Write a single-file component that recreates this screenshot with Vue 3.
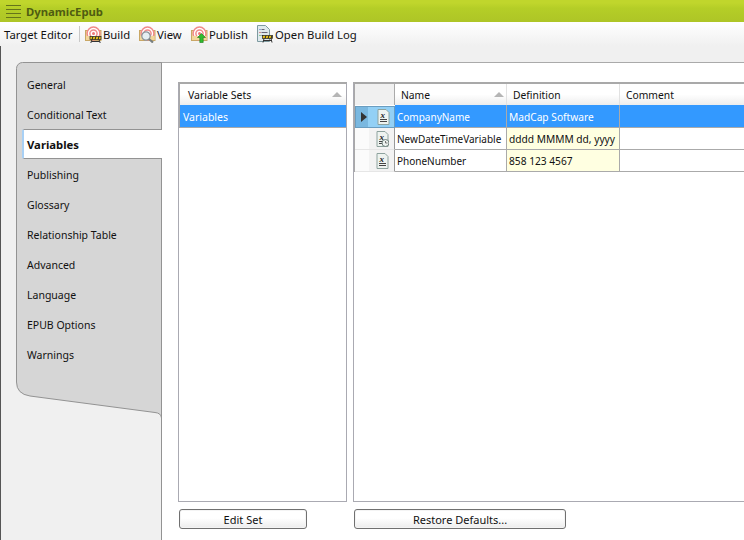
<script setup>
const tabs = ['General', 'Conditional Text', 'Variables', 'Publishing', 'Glossary', 'Relationship Table', 'Advanced', 'Language', 'EPUB Options', 'Warnings']
const rows = [
  { name: 'CompanyName', def: 'MadCap Software', selected: true, clock: false },
  { name: 'NewDateTimeVariable', def: 'dddd MMMM dd, yyyy', selected: false, clock: true },
  { name: 'PhoneNumber', def: '858 123 4567', selected: false, clock: false }
]
const tools = [
  { label: 'Build', kind: 'build' },
  { label: 'View', kind: 'view' },
  { label: 'Publish', kind: 'publish' }
]
</script>

<template>
  <div class="app">
    <header class="title">
      <svg class="menu" width="16" height="13" viewBox="0 0 16 13">
        <path d="M0 0.5h15M0 4.5h15M0 8.5h15M0 12.5h15" stroke="#66741a" stroke-width="1" fill="none" />
      </svg>
      <span>DynamicEpub</span>
    </header>

    <div class="toolbar">
      <span class="target">Target Editor</span>
      <span class="sep"></span>
      <button v-for="t in tools" :key="t.label" class="tool" :class="'tool-' + t.kind" type="button">
        <svg width="17" height="17" viewBox="0 0 17 17">
          <rect x="0.5" y="4.5" width="15.5" height="10" fill="#f3d69b" stroke="#c9a765" />
          <circle cx="8.5" cy="7.5" r="6.4" fill="#fff" stroke="#f08a8a" stroke-width="1.5" />
          <circle cx="8.5" cy="7.5" r="3.6" fill="#fff" stroke="#f08a8a" stroke-width="1.5" />
          <circle cx="8.5" cy="7.5" r="1.5" fill="#ee7676" />
          <rect x="1" y="10" width="14.5" height="4" fill="#f3d69b" />
          <template v-if="t.kind === 'build'">
            <rect x="5" y="10.5" width="11" height="3" fill="#e9c21c" stroke="#222" stroke-width="0.7" />
            <path d="M7 13.5l1-3M10 13.5l1-3M13 13.5l1-3" stroke="#222" />
            <path d="M7 13.5l-1.2 3.5M14 13.5l1.2 3.5M6.5 15.5h8" stroke="#333" fill="none" />
          </template>
          <template v-if="t.kind === 'view'">
            <circle cx="7" cy="10" r="4.2" fill="#e6eef2" stroke="#8a9299" stroke-width="1.2" />
            <path d="M10 13l4 3.5" stroke="#777f80" stroke-width="2.2" />
          </template>
          <template v-if="t.kind === 'publish'">
            <path d="M10.5 7.5l4 4h-2.3v5h-3.4v-5h-2.3z" fill="#2fbb2f" stroke="#187a18" stroke-width="0.6" />
          </template>
        </svg>
        <span>{{ t.label }}</span>
      </button>
      <button class="tool tool-log" type="button">
        <svg width="17" height="18" viewBox="0 0 17 18">
          <path d="M1.5 0.5h8l4 4v12h-12z" fill="#dfe9ed" stroke="#7d9aa0" />
          <path d="M3.5 4.5h1" stroke="#3366cc" />
          <path d="M5.5 4.5h3M5.5 7.5h6M5.5 10.5h2" stroke="#667" />
          <path d="M3.5 7.5h1" stroke="#cc3333" />
          <path d="M3.5 10.5h1" stroke="#33aa33" />
          <rect x="6.5" y="10.5" width="10" height="3" fill="#e9c21c" stroke="#222" stroke-width="0.7" />
          <path d="M9 13.5l1-3M12 13.5l1-3M15 13.5l1-3" stroke="#222" />
          <path d="M8 13.5l-1 4M15 13.5l1 4M8 15.5h7" stroke="#333" fill="none" />
        </svg>
        <span>Open Build Log</span>
      </button>
    </div>

    <main class="body">
      <nav class="side">
        <svg class="side-shape" width="146" height="358" viewBox="0 0 146 358">
          <path d="M0.5 6.5a6 6 0 0 1 6-6H145.5V356Q145 351 139 350.5L14 334Q0.5 332 0.5 320z" fill="#d6d6d6" stroke="#939393" />
        </svg>
        <ul class="tabs">
          <li v-for="t in tabs" :key="t" :class="{ active: t === 'Variables' }">{{ t }}</li>
        </ul>
      </nav>

      <section class="content">
        <div class="panes">
          <div class="left-col">
            <div class="sets">
              <div class="sets-head">
                <span>Variable Sets</span>
                <i class="sort"></i>
              </div>
              <div class="sets-row">Variables</div>
            </div>
            <button class="btn edit" type="button">Edit Set</button>
          </div>

          <div class="right-col">
            <div class="grid">
              <div class="grid-head">
                <div class="corner"></div>
                <div class="hcell name">Name<i class="sort"></i></div>
                <div class="hcell def">Definition</div>
                <div class="hcell comment">Comment</div>
              </div>
              <div v-for="r in rows" :key="r.name" class="grid-row" :class="{ selected: r.selected }">
                <div class="rowhead">
                  <i class="arrow" :class="{ hidden: !r.selected }"></i>
                  <svg width="13" height="16" viewBox="0 0 13 16">
                    <path d="M1 0.5h8l3 3v12H1z" fill="#eef3f0" stroke="#8ea39e" />
                    <text x="3.5" y="8.5" font-size="9" font-family="Liberation Serif, serif" font-style="italic" font-weight="700" fill="#222">x</text>
                    <path d="M3 10.5h7M3 12.5h7" stroke="#444" />
                    <g v-if="r.clock">
                      <circle cx="9.5" cy="12" r="3.5" fill="#eef3f0" stroke="#6f807c" />
                      <path d="M9.5 10v2h2" stroke="#555" fill="none" stroke-width="0.8" />
                    </g>
                  </svg>
                </div>
                <div class="cell name">{{ r.name }}</div>
                <div class="cell def">{{ r.def }}</div>
                <div class="cell comment"></div>
              </div>
            </div>
            <button class="btn restore" type="button">Restore Defaults...</button>
          </div>
        </div>
      </section>
    </main>
  </div>
</template>

<style>
html, body { margin: 0; overflow: hidden; }
</style>

<style scoped>
.app {
  width: 744px;
  height: 540px;
  overflow: hidden;
  display: flex;
  flex-direction: column;
  background: #f0f0f0;
  font-family: "Noto Sans", "Liberation Sans", sans-serif;
  font-size: 10.5px;
  color: #111;
}
.title {
  height: 22px;
  flex: none;
  display: flex;
  align-items: center;
  gap: 4px;
  padding-left: 6px;
  background: linear-gradient(#c0d62c 0 3px, #b5ce27 8px, #aec526);
  font-weight: 700;
  color: #4f5c12;
  font-size: 11.3px;
}
.menu { margin-top: 1px; }
.toolbar {
  height: 24px;
  flex: none;
  display: flex;
  align-items: center;
  padding-left: 4px;
  background: linear-gradient(#ffffff, #f0f0f0);
  font-size: 11.3px;
}
.target { width: 75px; flex: none; }
.sep { width: 1px; height: 16px; background: #c8c8c8; flex: none; margin-right: 5px; }
.tool {
  all: unset;
  display: flex;
  align-items: center;
  gap: 1px;
  font: inherit;
  cursor: default;
  flex: none;
}
.tool-build { width: 54px; }
.tool-view { width: 52px; }
.tool-publish { width: 65px; }
.tool-log { gap: 2px; }
.body {
  flex: 1;
  display: flex;
  padding-top: 16px;
  min-height: 0;
  border-left: 1px solid #555;
}
.side {
  position: relative;
  width: 145px;
  margin-left: 15px;
  flex: none;
}
.side-shape { position: absolute; left: 0; top: 0; }
.tabs {
  position: relative;
  list-style: none;
  margin: 8px 0 0;
  padding: 0;
}
.tabs li {
  height: 30px;
  line-height: 30px;
  padding-left: 11px;
  box-sizing: border-box;
}
.tabs li.active {
  margin: -1px -1px 1px 6px;
  padding-left: 3px;
  background: #fff;
  font-weight: 700;
  font-size: 11.3px;
  border: 1px solid #939393;
  border-left: 2px solid #a8d0f5;
  border-right: 0;
  border-radius: 2px 0 0 2px;
  line-height: 30px;
}
.content {
  flex: 1;
  background: #fff;
  border-top: 1px solid #aaa;
  border-left: 1px solid #939393;
  box-sizing: border-box;
  min-width: 0;
}
.panes {
  display: flex;
  gap: 6px;
  padding: 19px 0 0 16px;
}
.left-col { width: 169px; flex: none; }
.right-col { width: 420px; flex: none; }
.sets, .grid {
  height: 420px;
  box-sizing: border-box;
  border: 1px solid #aaaab2;
  border-top: 2px solid #a9a9a9;
  padding-left: 1px;
  background: #fff;
}
.sets-head {
  height: 21px;
  display: flex;
  align-items: center;
  justify-content: space-between;
  padding: 0 4px 0 8px;
  background: linear-gradient(#fff 50%, #ededed);
  box-sizing: border-box;
  box-shadow: -1px 0 #a9a9a9;
}
.sets-row {
  height: 23px;
  line-height: 23px;
  padding: 1px 0 0 3px;
  box-sizing: border-box;
  background: #3399ff;
  color: #fff;
  border-bottom: 1px solid #a9a9a9;
  box-shadow: -1px 0 #a9a9a9;
}
.sort {
  display: inline-block;
  width: 0;
  height: 0;
  border-left: 5px solid transparent;
  border-right: 5px solid transparent;
  border-bottom: 5px solid #b5b5b5;
}
.grid { border-right: 0; }
.grid-head {
  height: 21px;
  display: flex;
  background: linear-gradient(#fff 50%, #ededed);
  box-sizing: border-box;
  box-shadow: -1px 0 #a9a9a9;
  font-size: 10.3px;
}
.corner { width: 40px; flex: none; background: #f0f0f0; box-sizing: border-box; border-right: 1px solid #aaa; }
.hcell {
  display: flex;
  align-items: center;
  justify-content: space-between;
  padding: 0 2px 0 6px;
  box-sizing: border-box;
  border-right: 1px solid #e2e2e2;
}
.name { width: 112px; flex: none; }
.def { width: 113px; flex: none; }
.comment { flex: 1; }
.grid-row {
  height: 22px;
  display: flex;
  box-sizing: border-box;
  border-bottom: 1px solid #aaa;
  box-shadow: -1px 0 #a9a9a9;
}
.grid-row.selected { height: 23px; }
.rowhead {
  width: 40px;
  flex: none;
  box-sizing: border-box;
  display: flex;
  align-items: center;
  justify-content: space-between;
  padding: 0 5px 0 6px;
  background: linear-gradient(90deg, #fbfbfb 0 14px, #f3f3f3 14px);
  border-right: 1px solid #999;
  margin-bottom: -1px;
}
.grid-row:not(.selected) .rowhead { border-bottom: 1px solid #e6e6e6; }
.grid-row.selected .rowhead {
  background: linear-gradient(90deg, #7ab8e0 0 12px, #93d0f5 12px);
  margin-top: 1px;
  padding-left: 5px;
  padding-right: 4px;
  border: 1px solid #6a9dc0;
}
.arrow {
  display: block;
  width: 0;
  height: 0;
  border-top: 5px solid transparent;
  border-bottom: 5px solid transparent;
  border-left: 6px solid #333;
}
.arrow.hidden { visibility: hidden; }
.cell {
  line-height: 21px;
  padding: 1px 0 0 2px;
  box-sizing: border-box;
  border-right: 1px solid #aaa;
  white-space: nowrap;
  overflow: hidden;
  font-size: 10px;
}
.cell.def { padding-left: 2px; font-size: 10.2px; }
.selected .cell { line-height: 22px; }
.cell.def { background: #ffffe1; }
.cell.comment { background: #fff; border-right: 0; }
.selected .cell, .selected .cell.def, .selected .cell.comment {
  background: #3399ff;
  color: #fff;
}
.btn {
  display: block;
  height: 20px;
  padding: 0;
  margin-top: 7px;
  box-sizing: border-box;
  border: 1px solid #707070;
  border-radius: 3px;
  background: linear-gradient(#fff 45%, #ececec);
  box-shadow: inset 0 0 0 1px #f4f4f4;
  font: inherit;
  font-size: 11px;
  color: #111;
  text-align: center;
}
.edit { width: 128px; margin-left: 1px; }
.restore { width: 212px; margin-left: 1px; }
</style>
